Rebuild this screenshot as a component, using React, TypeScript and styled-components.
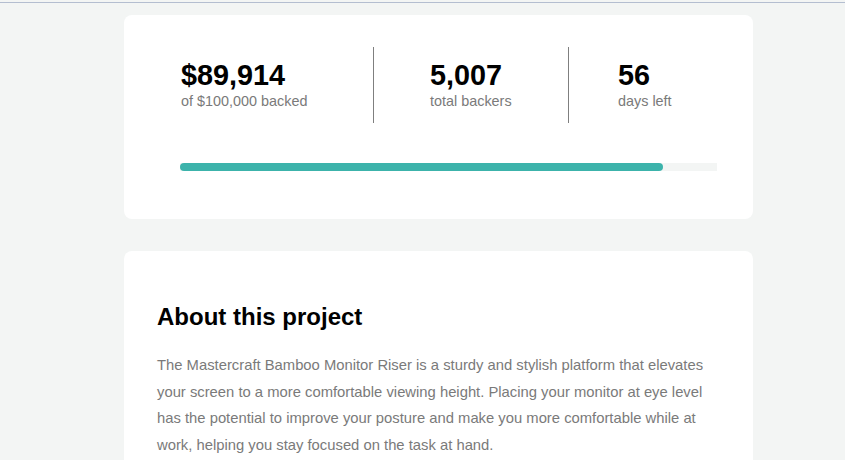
import React from "react";
import styled, { createGlobalStyle } from "styled-components";

const Global = createGlobalStyle`
  html, body {
    margin: 0;
    padding: 0;
    background: #f3f5f4;
    font-family: "Liberation Sans", Arial, sans-serif;
  }
`;

const TopLine = styled.div`
  margin-top: 2px;
  height: 1px;
  background: #b4bed0;
`;

const Page = styled.main`
  padding: 12px 0 40px 124px;
  display: flex;
  flex-direction: column;
  gap: 32px;
`;

const Card = styled.section<{ $pad: string }>`
  width: 629px;
  box-sizing: border-box;
  background: #ffffff;
  border-radius: 8px;
  padding: ${(p) => p.$pad};
`;

const StatsRow = styled.div`
  display: flex;
  height: 76px;
  padding-left: 1px;
`;

const Stat = styled.div<{ $width?: number; $left: number }>`
  box-sizing: border-box;
  ${(p) => (p.$width ? `width: ${p.$width}px;` : "")}
  padding: 12px 0 0 ${(p) => p.$left}px;
  display: flex;
  flex-direction: column;
`;

const Divider = styled.div`
  width: 1px;
  align-self: stretch;
  background: #7f7f7f;
`;

const Value = styled.div`
  font-size: 28.8px;
  line-height: 32px;
  font-weight: 700;
  color: #000;
`;

const Label = styled.div`
  margin-top: 2px;
  font-size: 14.4px;
  line-height: 17px;
  color: #7a7a7a;
`;

const Track = styled.div`
  margin-top: 40px;
  height: 8px;
  background: #f3f5f4;
`;

const Fill = styled.div`
  height: 100%;
  background: #3cb3ab;
  border-radius: 5px;
`;

const Heading = styled.h2`
  margin: 0;
  font-size: 24px;
  line-height: 28px;
  font-weight: 700;
  color: #000;
`;

const Paragraph = styled.p`
  margin: 21px 0 0;
  font-size: 14.8px;
  line-height: 1.8;
  color: #7a7a7a;
`;

export default function App() {
  const backed = 89914;
  const goal = 100000;
  return (
    <>
      <Global />
      <TopLine />
      <Page>
        <Card $pad="32px 36px 48px 56px">
          <StatsRow>
            <Stat $width={192} $left={0}>
              <Value>$89,914</Value>
              <Label>of $100,000 backed</Label>
            </Stat>
            <Divider />
            <Stat $width={194} $left={56}>
              <Value>5,007</Value>
              <Label>total backers</Label>
            </Stat>
            <Divider />
            <Stat $left={49}>
              <Value>56</Value>
              <Label>days left</Label>
            </Stat>
          </StatsRow>
          <Track>
            <Fill style={{ width: `${(backed / goal) * 100}%` }} />
          </Track>
        </Card>
        <Card $pad="52px 33px 48px 33px">
          <Heading>About this project</Heading>
          <Paragraph>
            The Mastercraft Bamboo Monitor Riser is a sturdy and stylish platform that elevates
            your screen to a more comfortable viewing height. Placing your monitor at eye level
            has the potential to improve your posture and make you more comfortable while at
            work, helping you stay focused on the task at hand.
          </Paragraph>
        </Card>
      </Page>
    </>
  );
}
